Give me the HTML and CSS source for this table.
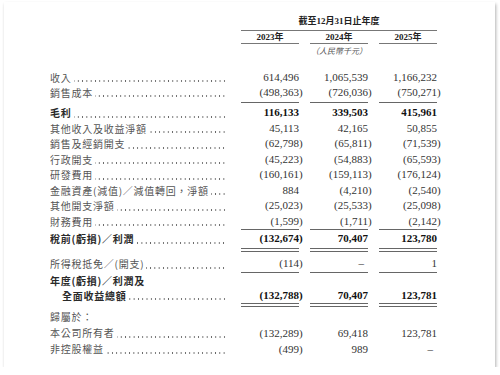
FILE: index.html
```html
<!DOCTYPE html>
<html lang="zh-Hant">
<head>
    <meta charset="UTF-8">
    <meta name="viewport" content="width=device-width, initial-scale=1.0">
    <title>綜合損益表</title>
    <link rel="stylesheet" href="styles.css">
</head>
<body>
    <div class="page">
        <div class="row head">
            <span></span>
            <span class="title">截至12月31日止年度</span>
        </div>
        <div class="row years">
            <span></span>
            <span class="year">2023年</span>
            <span class="year">2024年</span>
            <span class="year">2025年</span>
        </div>
        <div class="row unit">
            <span></span>
            <span></span>
            <span class="unit-text">（人民幣千元）</span>
            <span></span>
        </div>

        <div class="row line first">
            <span class="label">收入</span>
            <span class="num">614,496</span>
            <span class="num">1,065,539</span>
            <span class="num">1,166,232</span>
        </div>
        <div class="row line">
            <span class="label">銷售成本</span>
            <span class="num"><span class="neg">(498,363)</span></span>
            <span class="num"><span class="neg">(726,036)</span></span>
            <span class="num"><span class="neg">(750,271)</span></span>
        </div>
        <div class="row rule r1"><span></span><i></i><i></i><i></i></div>

        <div class="row line bold">
            <span class="label">毛利</span>
            <span class="num">116,133</span>
            <span class="num">339,503</span>
            <span class="num">415,961</span>
        </div>
        <div class="row line">
            <span class="label">其他收入及收益淨額</span>
            <span class="num">45,113</span>
            <span class="num">42,165</span>
            <span class="num">50,855</span>
        </div>
        <div class="row line">
            <span class="label">銷售及經銷開支</span>
            <span class="num"><span class="neg">(62,798)</span></span>
            <span class="num"><span class="neg">(65,811)</span></span>
            <span class="num"><span class="neg">(71,539)</span></span>
        </div>
        <div class="row line">
            <span class="label">行政開支</span>
            <span class="num"><span class="neg">(45,223)</span></span>
            <span class="num"><span class="neg">(54,883)</span></span>
            <span class="num"><span class="neg">(65,593)</span></span>
        </div>
        <div class="row line">
            <span class="label">研發費用</span>
            <span class="num"><span class="neg">(160,161)</span></span>
            <span class="num"><span class="neg">(159,113)</span></span>
            <span class="num"><span class="neg">(176,124)</span></span>
        </div>
        <div class="row line">
            <span class="label">金融資產(減值)／減值轉回，淨額</span>
            <span class="num">884</span>
            <span class="num"><span class="neg">(4,210)</span></span>
            <span class="num"><span class="neg">(2,540)</span></span>
        </div>
        <div class="row line">
            <span class="label">其他開支淨額</span>
            <span class="num"><span class="neg">(25,023)</span></span>
            <span class="num"><span class="neg">(25,533)</span></span>
            <span class="num"><span class="neg">(25,098)</span></span>
        </div>
        <div class="row line">
            <span class="label">財務費用</span>
            <span class="num"><span class="neg">(1,599)</span></span>
            <span class="num"><span class="neg">(1,711)</span></span>
            <span class="num"><span class="neg">(2,142)</span></span>
        </div>
        <div class="row rule r2"><span></span><i></i><i></i><i></i></div>

        <div class="row line bold">
            <span class="label">稅前(虧損)／利潤</span>
            <span class="num"><span class="neg">(132,674)</span></span>
            <span class="num">70,407</span>
            <span class="num">123,780</span>
        </div>
        <div class="row rule double r3"><span></span><i></i><i></i><i></i></div>

        <div class="row line">
            <span class="label">所得稅抵免／(開支)</span>
            <span class="num"><span class="neg">(114)</span></span>
            <span class="num"><span class="dash">–</span></span>
            <span class="num">1</span>
        </div>
        <div class="row rule r4"><span></span><i></i><i></i><i></i></div>

        <div class="row line bold">
            <span class="label plain">年度(虧損)／利潤及</span>
            <span></span><span></span><span></span>
        </div>
        <div class="row line bold total">
            <span class="label indent">全面收益總額</span>
            <span class="num"><span class="neg">(132,788)</span></span>
            <span class="num">70,407</span>
            <span class="num">123,781</span>
        </div>
        <div class="row rule double r5"><span></span><i></i><i></i><i></i></div>

        <div class="row line tall">
            <span class="label plain">歸屬於：</span>
            <span></span><span></span><span></span>
        </div>
        <div class="row line tall">
            <span class="label">本公司所有者</span>
            <span class="num"><span class="neg">(132,289)</span></span>
            <span class="num">69,418</span>
            <span class="num">123,781</span>
        </div>
        <div class="row line tall">
            <span class="label">非控股權益</span>
            <span class="num"><span class="neg">(499)</span></span>
            <span class="num">989</span>
            <span class="num"><span class="dash">–</span></span>
        </div>
    </div>
</body>
</html>
```

FILE: styles.css
```css
body {
    margin: 0;
    background: #fff;
    font-family: "Liberation Serif", "Noto Sans CJK TC", serif;
    color: #333;
}
.page {
    width: 491px;
    height: 365px;
    margin: 2px 0 0 4px;
    padding: 13px 0 0 46px;
    box-sizing: border-box;
    background: #fff;
    box-shadow: 1px 2px 3px rgba(0, 0, 0, 0.3);
}
.row {
    display: grid;
    grid-template-columns: 180px 58px 58px 58px;
    column-gap: 11px;
}

/* header */
.title {
    grid-column: 2 / 5;
    text-align: center;
    font-size: 9px;
    font-weight: bold;
    line-height: 13px;
    padding-bottom: 2px;
    border-bottom: 1px solid #777;
    color: #222;
}
.year {
    text-align: center;
    font-size: 9px;
    font-weight: bold;
    line-height: 12px;
    border-bottom: 1px solid #777;
    color: #222;
}
.unit-text {
    text-align: center;
    font-size: 8px;
    font-style: italic;
    line-height: 16px;
    color: #555;
    white-space: nowrap;
}

/* body rows */
.line {
    height: 15.5px;
    line-height: 15.5px;
}
.line.first {
    margin-top: 10px;
}
.line.first,
.line.first + .line {
    height: 15px;
    line-height: 15px;
}
.line.total {
    height: 15px;
    line-height: 15px;
}
.line.tall {
    height: 16px;
    line-height: 16px;
}
.label {
    display: flex;
    padding-right: 4px;
    font-family: "Noto Sans CJK TC", sans-serif;
    font-size: 10px;
    letter-spacing: 0.75px;
    color: #555;
    white-space: nowrap;
    overflow: hidden;
}
.label::after {
    content: "";
    flex: 1;
    margin-left: 2px;
    background: radial-gradient(circle, #666 0.6px, transparent 1px) right bottom 2px / 4.3px 4px repeat-x;
}
.label.plain::after {
    display: none;
}
.label.indent {
    padding-left: 12px;
}
.bold .label {
    font-weight: bold;
    color: #2a2a2a;
}
.num {
    text-align: right;
    font-size: 11px;
    white-space: nowrap;
}
.bold .num {
    font-weight: bold;
    color: #111;
}
.neg {
    margin-right: -0.333em;
}
.dash {
    padding-right: 4px;
}

/* underlines */
.rule {
    height: 1px;
}
.rule i {
    border-top: 1px solid #666;
}
.rule.r1 {
    margin: 2px 0 2px;
}
.rule.r2 {
    margin: 0 0 1px;
}
.rule.double {
    height: 4px;
}
.rule.double i {
    height: 2px;
    border-bottom: 1px solid #666;
}
.rule.r3 {
    margin: 1.5px 0 4px;
}
.rule.r4 {
    margin: 0 0 0;
}
.rule.r5 {
    margin: 0 0 2px;
}
```
